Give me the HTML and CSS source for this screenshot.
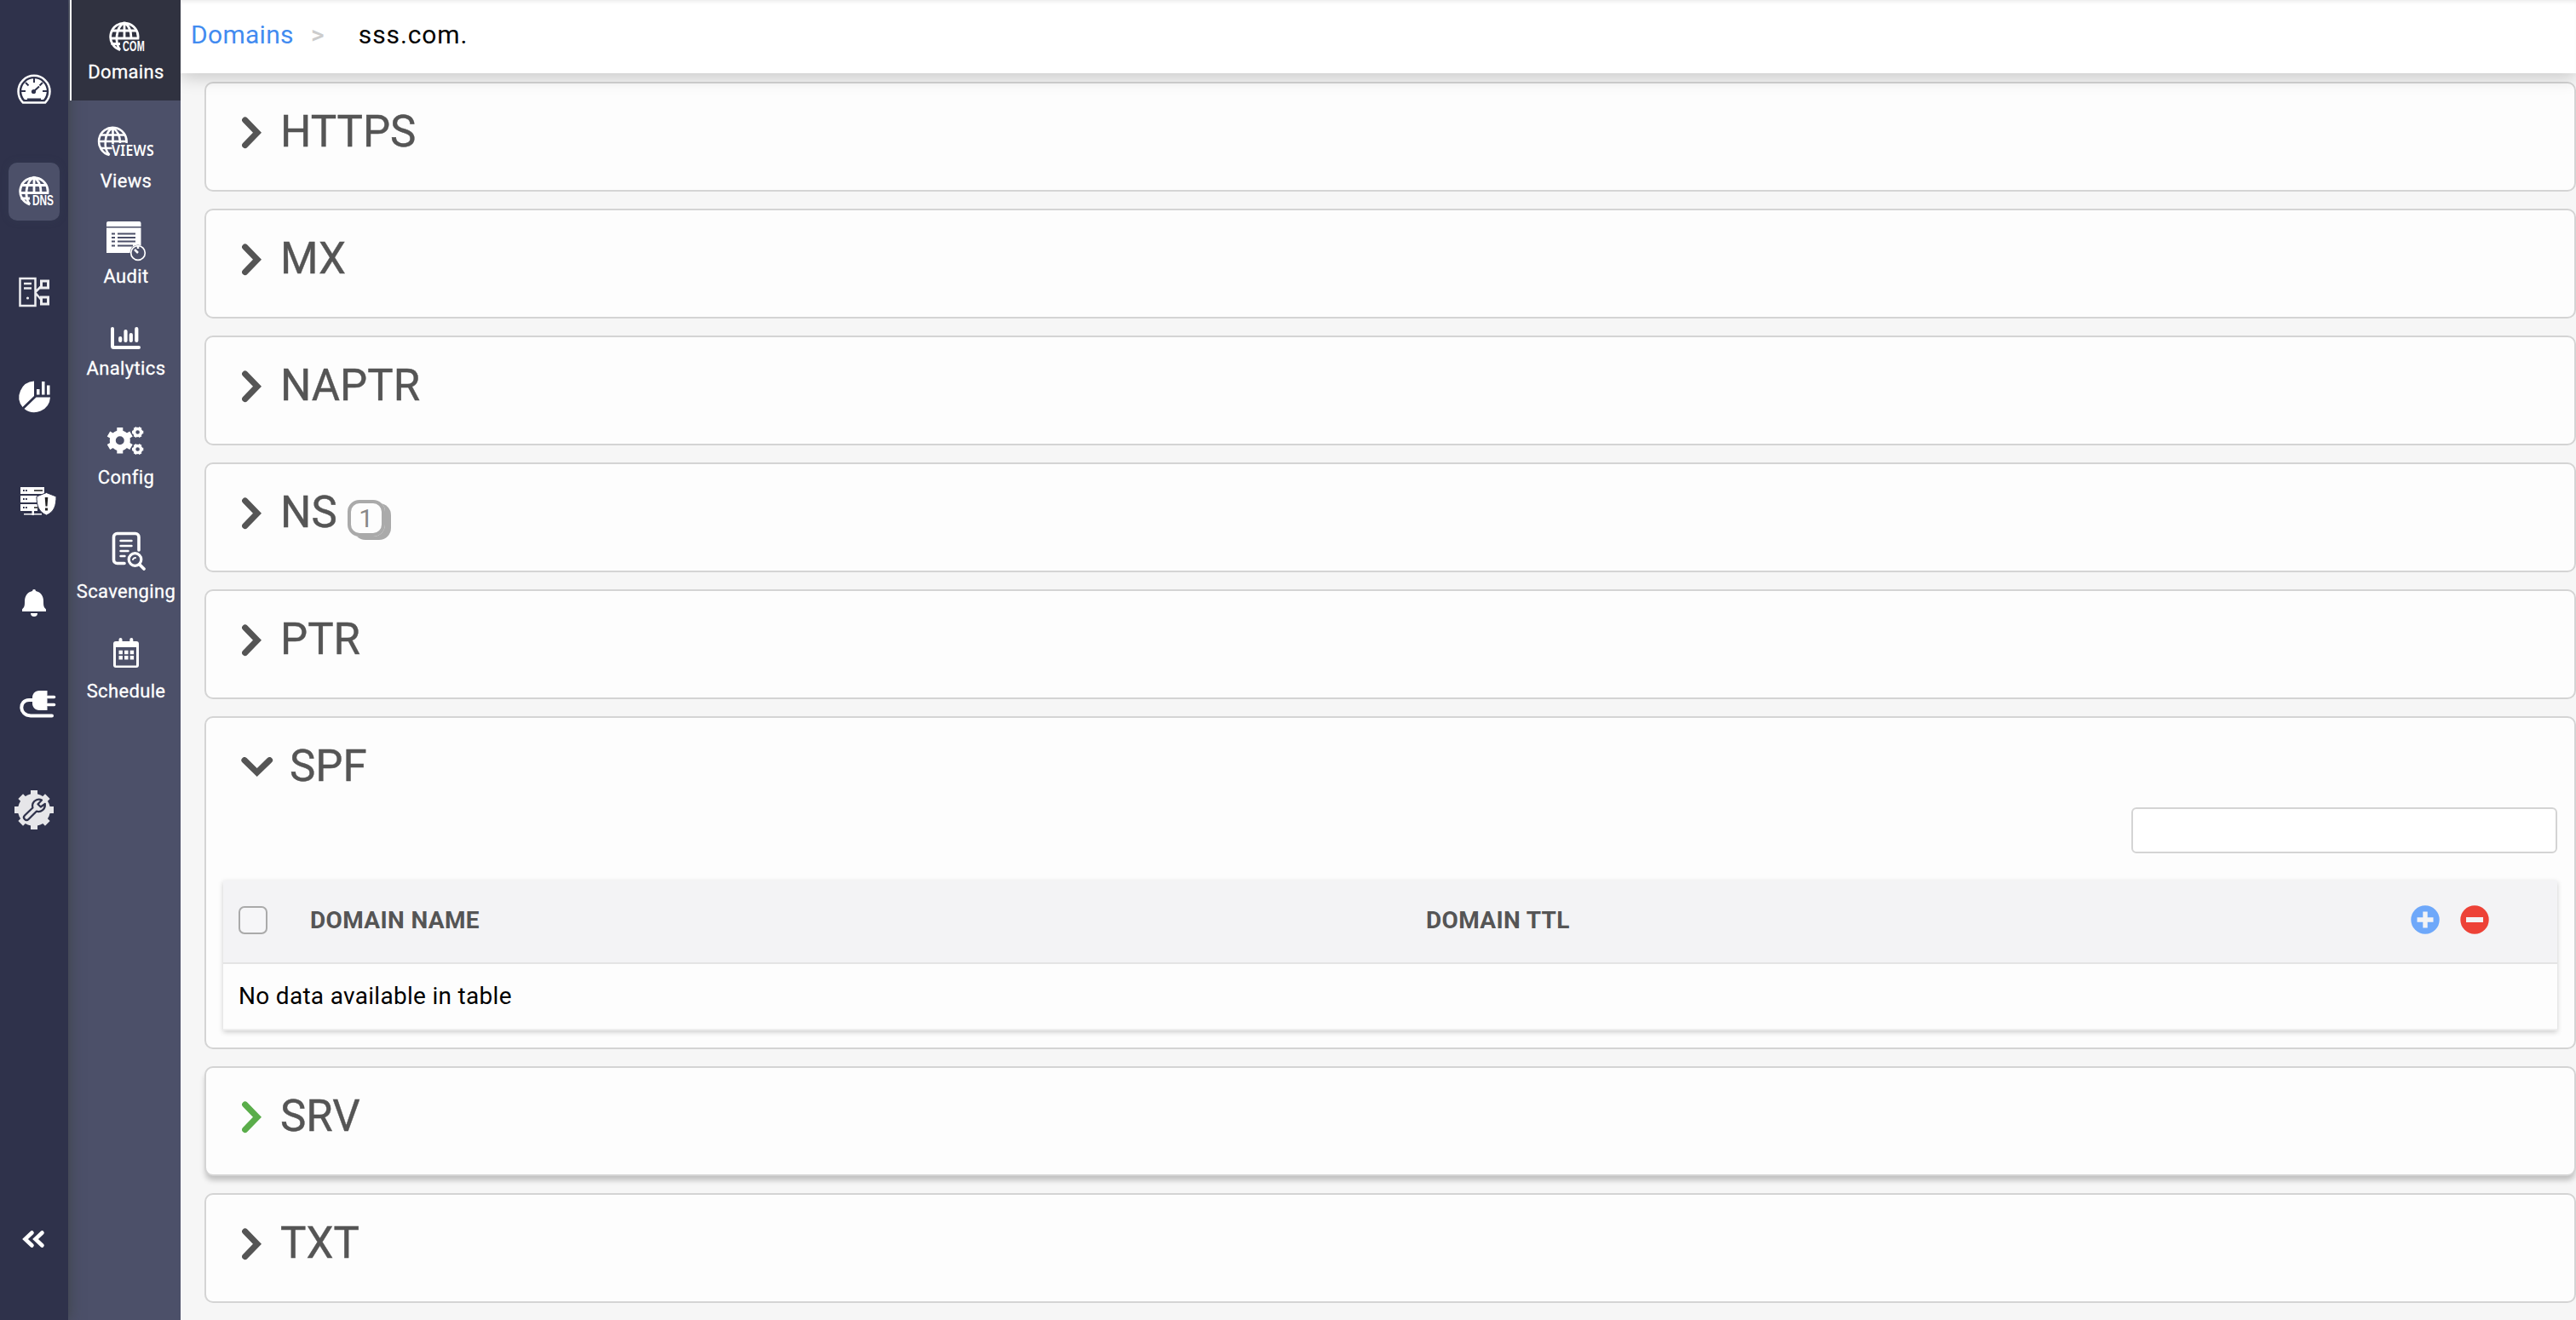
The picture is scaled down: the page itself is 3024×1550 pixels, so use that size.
FILE: index.html
```html
<!DOCTYPE html>
<html lang="en">
<head>
    <meta charset="UTF-8">
    <meta name="viewport" content="width=device-width, initial-scale=1.0">
    <title>Domains - sss.com.</title>
    <link rel="stylesheet" href="styles.css">
</head>
<body>
    <svg class="defs" width="0" height="0">
        <symbol id="globe" viewBox="0 0 36 36">
            <g fill="none" stroke="#fff" stroke-width="2.8">
                <path d="M13 34.200A16.200 16.200 0 1 1 34 20.500H1.800"/>
                <path d="M3.200 11.500h29.600M13 34.200C7 27 7 8 18 2M18 2c6 4 8 11 8 18M18 2v18M2.500 27H13"/>
            </g>
        </symbol>
        <symbol id="globe-full" viewBox="0 0 36 36">
            <g fill="none" stroke="#fff" stroke-width="2.6">
                <path d="M14 34A16.300 16.300 0 1 1 34 20"/>
                <path d="M3.500 10.500h29M1.800 18h32.400M3.500 26h14M14 34C7 27 7 8 18 2M18 2c6 4 8.500 11 8.500 18M18 2v25"/>
            </g>
        </symbol>
        <symbol id="right" viewBox="0 0 23 38">
            <path d="M3.700 4l14.300 14.700L3.700 33.500" fill="none" stroke="currentColor" stroke-width="7.200" stroke-linecap="round" stroke-linejoin="miter"/>
        </symbol>
        <symbol id="down" viewBox="0 0 38 23">
            <path d="M4 3.700l14.700 14.300L33.500 3.700" fill="none" stroke="currentColor" stroke-width="7.200" stroke-linecap="round" stroke-linejoin="miter"/>
        </symbol>
    </svg>

    <div class="app">
        <nav class="rail">
            <a class="rail-item">
                <svg viewBox="0 0 60 68">
                    <path d="M17 50.500A18.500 18.500 0 1 1 43 50.500z" fill="none" stroke="#fff" stroke-width="2.500"/>
                    <path d="M19 47A14.800 14.800 0 1 1 41 47z" fill="#fff"/>
                    <path d="M30 22v5M20 27l3.500 3.500M40 27l-3.500 3.500M15 37h5M45 37h-5M22 46.500h16M30 37l6-5.500" stroke="#2f324b" stroke-width="2"/>
                    <circle cx="29.500" cy="37.500" r="2.600" fill="#2f324b"/>
                </svg>
            </a>
            <a class="rail-item selected">
                <svg viewBox="0 0 60 68">
                    <use href="#globe" x="12" y="15" width="36" height="36"/>
                    <text x="28" y="49.500" textLength="25" lengthAdjust="spacingAndGlyphs" class="icon-text">DNS</text>
                </svg>
            </a>
            <a class="rail-item">
                <svg viewBox="0 0 60 68">
                    <g fill="none" stroke="#ededf0" stroke-width="2.500">
                        <path d="M13.500 15h18v32h-18zM18 21h9M18 26.500h9M32 30.500l6-6M32 32.500l6 7"/>
                        <path d="M38.500 18h8v8h-8zM38.500 37h8v8h-8z" stroke-width="3"/>
                    </g>
                    <circle cx="22.500" cy="38" r="1.600" fill="#ededf0"/>
                </svg>
            </a>
            <a class="rail-item">
                <svg viewBox="0 0 60 68" fill="#fff">
                    <path d="M30 14.500V32L16.500 45A18.800 18.800 0 0 1 30 14.500z"/>
                    <path d="M32.500 33.500H49A18.800 18.800 0 0 1 18.500 47z"/>
                    <path d="M33 24h3.500v6.500H33zM39 15h3.500v15.500H39zM45 19.500h3.500v11H45z"/>
                </svg>
            </a>
            <a class="rail-item">
                <svg viewBox="0 0 60 68">
                    <path d="M14 18h28v8H14zM14 28h20v8H14zM14 38h20v8H14zM27.500 46h2.500v5h-2.500zM18 49h21v1.600H18z" fill="#fff"/>
                    <path d="M17 22h5M17 32h5M17 42h5" stroke="#2f324b" stroke-width="1.800" stroke-dasharray="1.800 1.200"/>
                    <path d="M30 22h10M30 42h5" stroke="#555" stroke-width="2"/>
                    <path d="M44.500 24.500l11.500 4.500c0 10-2 18-11.500 22-9.500-4-11.500-12-11.500-22z" fill="#fff" stroke="#2f324b" stroke-width="1"/>
                    <path d="M42.700 30h3.600l-.8 10.500h-2zM43 42.500h3v3h-3z" fill="#222"/>
                </svg>
            </a>
            <a class="rail-item">
                <svg viewBox="0 0 60 68" fill="#fff">
                    <path d="M28 19a2 2 0 0 1 4 0c6 1.400 9 6 9 12 0 6 .5 7 3 9.500V43H16v-2.500c2.500-2.500 3-3.500 3-9.500 0-6 3-10.600 9-12z"/>
                    <path d="M26 45h8a4 4 0 0 1-8 0z"/>
                </svg>
            </a>
            <a class="rail-item">
                <svg viewBox="0 0 60 68">
                    <path d="M28 26h-4c-12 0-12 18 2 18.500h25" fill="none" stroke="#fff" stroke-width="4" stroke-linecap="round"/>
                    <path d="M36 15h9.500v23H36c-5 0-8-4-8-8v-7c0-4 3-8 8-8z" fill="#fff"/>
                    <path d="M46 22.500h7.500M46 31.500h7.500" stroke="#fff" stroke-width="3.600" stroke-linecap="round"/>
                </svg>
            </a>
            <a class="rail-item">
                <svg viewBox="0 0 60 68">
                    <circle cx="30" cy="34" r="19" fill="#e6e6e9"/>
                    <path d="M30 11v46M7 34h46M14.200 18.200l31.600 31.600M45.800 18.200L14.200 49.800" stroke="#e6e6e9" stroke-width="8"/>
                    <path d="M39 22.500c-4-2-9 0-10.500 4-.7 2-.6 3.500-.1 5L19 40.500c-3 3 1.500 7.500 4.500 4.500l9.300-9.300c5 1.500 10.500-2 10-8.700l-5 3.500-3.300-3.300z" fill="none" stroke="#2f324b" stroke-width="2.300" stroke-linejoin="round"/>
                </svg>
            </a>
            <a class="rail-item collapse">
                <svg viewBox="0 0 60 68">
                    <path d="M27.500 26.500l-8 7.500 8 7.500M39.500 26.500l-8 7.500 8 7.500" fill="none" stroke="#fff" stroke-width="4.600" stroke-linecap="round"/>
                </svg>
            </a>
        </nav>

        <nav class="subnav">
            <a class="subnav-item active">
                <svg viewBox="0 0 100 60">
                    <use href="#globe" x="30" y="13.500" width="36" height="36"/>
                    <text x="46" y="48.500" textLength="26" lengthAdjust="spacingAndGlyphs" class="icon-text on-dark">COM</text>
                </svg>
                <span>Domains</span>
            </a>
            <a class="subnav-item">
                <svg viewBox="0 0 100 60">
                    <use href="#globe-full" x="16.500" y="9" width="36" height="36"/>
                    <text x="33" y="43.500" textLength="50" lengthAdjust="spacingAndGlyphs" class="icon-text views">VIEWS</text>
                </svg>
                <span>Views</span>
            </a>
            <a class="subnav-item">
                <svg viewBox="0 0 100 60">
                    <path d="M29 9h36.500a2 2 0 0 1 2 2v4H27v-4a2 2 0 0 1 2-2zM27 16.500h40.500V46H27z" fill="#fff"/>
                    <path d="M33 23.500h4M40 23.500h21M33 28h4M40 28h21M33 32.500h4M40 32.500h21M33 37.500h4M40 37.500h18" stroke="#4c5069" stroke-width="2"/>
                    <circle cx="64" cy="46" r="9.500" fill="#4c5069"/>
                    <circle cx="64" cy="46" r="8.300" fill="none" stroke="#fff" stroke-width="1.700"/>
                    <path d="M60 42l4 4M64 37v4" stroke="#fff" stroke-width="2.500"/>
                </svg>
                <span>Audit</span>
            </a>
            <a class="subnav-item">
                <svg viewBox="0 0 100 60">
                    <path d="M34 27v20.500a1.500 1.500 0 0 0 1.500 1.500H65" fill="none" stroke="#fff" stroke-width="4" stroke-linecap="round"/>
                    <path d="M43.200 38v3M49.500 30v11M55.800 34v7M62.300 27v14" stroke="#fff" stroke-width="4.200" stroke-linecap="round"/>
                </svg>
                <span>Analytics</span>
            </a>
            <a class="subnav-item">
                <svg viewBox="0 0 100 60" fill="none" stroke="#fff">
                    <circle cx="42.800" cy="30.300" r="8.500" stroke-width="7"/>
                    <path d="M42.800 15v7M42.800 38.500v7M29.500 22.600l6 3.500M50 34.500l6 3.500M29.500 38l6-3.500M50 26.100l6-3.500" stroke-width="7"/>
                    <circle cx="63.600" cy="20.500" r="4" stroke-width="3.400"/>
                    <path d="M57 20.500h2.500M67.800 20.500h2.500M60.300 14.800l1.200 2.200M66.900 14.800l-1.200 2.200M60.300 26.200l1.200-2.200M66.900 26.200l-1.200-2.200" stroke-width="3.600"/>
                    <circle cx="63.600" cy="40.500" r="4" stroke-width="3.400"/>
                    <path d="M57 40.500h2.500M67.800 40.500h2.500M60.300 34.800l1.200 2.200M66.900 34.800l-1.200 2.200M60.300 46.200l1.200-2.200M66.900 46.200l-1.200-2.200" stroke-width="3.600"/>
                </svg>
                <span>Config</span>
            </a>
            <a class="subnav-item">
                <svg viewBox="0 0 100 60" fill="none" stroke="#fff" stroke-linecap="round">
                    <path d="M48 40.500h-8.500a4 4 0 0 1-4-4V9.500a4 4 0 0 1 4-4h21.500a4 4 0 0 1 4 4V25" stroke-width="3.600"/>
                    <path d="M43.500 14h13M43.500 20h13M43.500 26h9M43.500 32h5" stroke-width="2.400"/>
                    <circle cx="60.500" cy="36" r="7.300" stroke-width="3.200"/>
                    <path d="M66 42l5 5" stroke-width="3.800"/>
                    <path d="M58 36a3 3 0 0 1 3-2" stroke-width="2"/>
                </svg>
                <span>Scavenging</span>
            </a>
            <a class="subnav-item">
                <svg viewBox="0 0 100 60">
                    <path d="M38 15h24a3 3 0 0 1 3 3v25a3 3 0 0 1-3 3H38a3 3 0 0 1-3-3V18a3 3 0 0 1 3-3z" fill="#fff"/>
                    <path d="M38 22h24v21.500H38z" fill="#4c5069"/>
                    <path d="M43.500 13v4M56.300 13v4" stroke="#fff" stroke-width="4" stroke-linecap="round"/>
                    <path d="M41.500 28h18M41.500 34.300h18" stroke="#fff" stroke-width="4.400" stroke-dasharray="4.400 2.200"/>
                </svg>
                <span>Schedule</span>
            </a>
        </nav>

        <main class="content">
            <header class="breadcrumb">
                <a class="crumb-link">Domains</a>
                <span class="crumb-sep">&gt;</span>
                <span class="crumb-current">sss.com.</span>
            </header>

            <div class="records">
                <section class="card">
                    <h2><svg class="chevron"><use href="#right"/></svg>HTTPS</h2>
                </section>
                <section class="card">
                    <h2><svg class="chevron"><use href="#right"/></svg>MX</h2>
                </section>
                <section class="card">
                    <h2><svg class="chevron"><use href="#right"/></svg>NAPTR</h2>
                </section>
                <section class="card">
                    <h2><svg class="chevron"><use href="#right"/></svg>NS<span class="count">1</span></h2>
                </section>
                <section class="card">
                    <h2><svg class="chevron"><use href="#right"/></svg>PTR</h2>
                </section>
                <section class="card open">
                    <h2><svg class="chevron down"><use href="#down"/></svg>SPF</h2>
                    <input type="text" class="search">
                    <div class="table">
                        <div class="table-head">
                            <input type="checkbox" class="check">
                            <span class="col-name">DOMAIN NAME</span>
                            <span class="col-ttl">DOMAIN TTL</span>
                            <svg class="action" viewBox="0 0 34 34">
                                <circle cx="17" cy="17" r="16.700" fill="#6ea8fa"/>
                                <path d="M17 7.500v19M7.500 17h19" stroke="#f3f3f5" stroke-width="5.400"/>
                            </svg>
                            <svg class="action" viewBox="0 0 34 34">
                                <circle cx="17" cy="17" r="16.700" fill="#ed4237"/>
                                <path d="M7 17h20" stroke="#f3f3f5" stroke-width="6"/>
                            </svg>
                        </div>
                        <div class="table-empty">No data available in table</div>
                    </div>
                </section>
                <section class="card hovered">
                    <h2><svg class="chevron"><use href="#right"/></svg>SRV</h2>
                </section>
                <section class="card">
                    <h2><svg class="chevron"><use href="#right"/></svg>TXT</h2>
                </section>
            </div>
        </main>
    </div>
</body>
</html>
```
FILE: styles.css
```css
* {
    box-sizing: border-box;
}
body {
    margin: 0;
    font-family: Roboto, "Liberation Sans", sans-serif;
    background: #f6f6f6;
    color: #000;
}
.defs {
    display: block;
}
.app {
    display: flex;
    height: 1550px;
    overflow: hidden;
}

/* left icon rail */
.rail {
    display: flex;
    flex-direction: column;
    align-items: center;
    gap: 53px;
    width: 80px;
    padding: 70px 0 61px;
    background: #2f324b;
    box-shadow: 2px 0 14px rgba(60, 65, 65, 0.7);
    z-index: 1;
}
.rail-item {
    width: 60px;
    height: 68px;
    border-radius: 10px;
}
.rail-item svg {
    display: block;
    width: 60px;
    height: 68px;
    overflow: visible;
}
.selected {
    background: #4c5069;
    box-shadow: 0 0 10px rgba(60, 70, 90, 0.3);
}
.collapse {
    margin-top: auto;
}
.icon-text {
    font-family: "Liberation Sans", sans-serif;
    font-size: 16.5px;
    font-weight: bold;
    fill: #fff;
    stroke: #4c5069;
    stroke-width: 2px;
    paint-order: stroke;
}
.on-dark {
    stroke: #303240;
}
.views {
    font-family: "Noto Sans", sans-serif;
    font-size: 18px;
    font-weight: 600;
    stroke-width: 1.5px;
}

/* section menu */
.subnav {
    width: 132px;
    background: #4c5069;
    display: grid;
    grid-template-rows: 118px 128px 112px 108px 128px 134px 117px;
}
.subnav-item {
    display: flex;
    flex-direction: column;
    align-items: center;
    justify-content: flex-end;
    padding: 0 0 20px 4px;
    color: #fff;
    font-size: 22px;
    line-height: 26px;
    letter-spacing: 0.35px;
    -webkit-text-stroke: 0.3px #fff;
}
.subnav-item svg {
    width: 100px;
    height: 60px;
    margin-bottom: 1px;
    flex: none;
}
.active {
    position: relative;
    z-index: 2;
    margin-left: 2px;
    padding-left: 0;
    background: #303240;
    border-left: 2px solid #fff;
}

/* main area */
.content {
    flex: 1;
    min-width: 0;
}
.breadcrumb {
    position: relative;
    z-index: 1;
    display: flex;
    height: 86px;
    padding: 22px 0 0 12px;
    background: #fff;
    font-size: 30px;
    line-height: 38px;
    letter-spacing: 0.3px;
    box-shadow: 0 4px 20px rgba(0, 0, 0, 0.2), inset 0 4px 4px -2px rgba(0, 0, 0, 0.08);
}
.crumb-link {
    color: #428bf0;
}
.crumb-sep {
    margin: 0 40px 0 20px;
    color: #ccc;
    font-weight: 500;
}
.crumb-current {
    letter-spacing: 0.9px;
}
.records {
    display: flex;
    flex-direction: column;
    gap: 20px;
    padding: 10px 0 0 28px;
}
.card {
    height: 129px;
    padding: 27px 20px 0;
    background: #fdfdfd;
    border: 2px solid #d4d4d4;
    border-radius: 10px;
}
.card h2 {
    display: flex;
    margin: 0 0 0 22px;
    font-size: 51px;
    font-weight: 400;
    line-height: 60px;
    color: #555;
    -webkit-text-stroke: 0.4px #555;
}
.chevron {
    width: 23px;
    height: 38px;
    margin: 12px 22px 0 0;
}
.hovered {
    box-shadow: 0 6px 6px -1px rgba(0, 0, 0, 0.22);
}
.hovered .chevron {
    color: #5aad4a;
}
.count {
    width: 44px;
    height: 43px;
    margin: 15px 0 0 12px;
    border: 4px solid #aaa;
    border-radius: 14px;
    box-shadow: 7px 4px 0 #aaa;
    color: #888;
    font-size: 30px;
    line-height: 35px;
    text-align: center;
    -webkit-text-stroke: 0;
}
.open {
    height: 391px;
}
.down {
    width: 38px;
    height: 23px;
    margin: 19px 19px 0 -1px;
}
.search {
    display: block;
    width: 500px;
    height: 54px;
    margin: 18px 0 32px auto;
    background: #fff;
    border: 2px solid #d4d4d4;
    border-radius: 6px;
}
.table {
    height: 176px;
    background: #fdfdfd;
    box-shadow: 0 2px 6px rgba(0, 0, 0, 0.2);
}
.table-head {
    display: flex;
    align-items: center;
    height: 98px;
    padding: 0 80px 4px 18px;
    background: #f3f3f5;
    border-bottom: 2px solid #e4e4e4;
    color: #555;
    font-size: 28px;
    font-weight: bold;
    letter-spacing: 0.35px;
}
.check {
    appearance: none;
    width: 34px;
    height: 33px;
    margin: 0;
    background: #f6f6f8;
    border: 2px solid #aaa;
    border-radius: 7px;
}
.col-name {
    width: 1310px;
    margin-left: 50px;
}
.col-ttl {
    flex: 1;
}
.action {
    width: 34px;
    height: 34px;
    margin-left: 24px;
}
.table-empty {
    height: 78px;
    padding-left: 18px;
    border-bottom: 2px solid #eee;
    font-size: 28px;
    line-height: 76px;
    letter-spacing: 0.3px;
}
```
